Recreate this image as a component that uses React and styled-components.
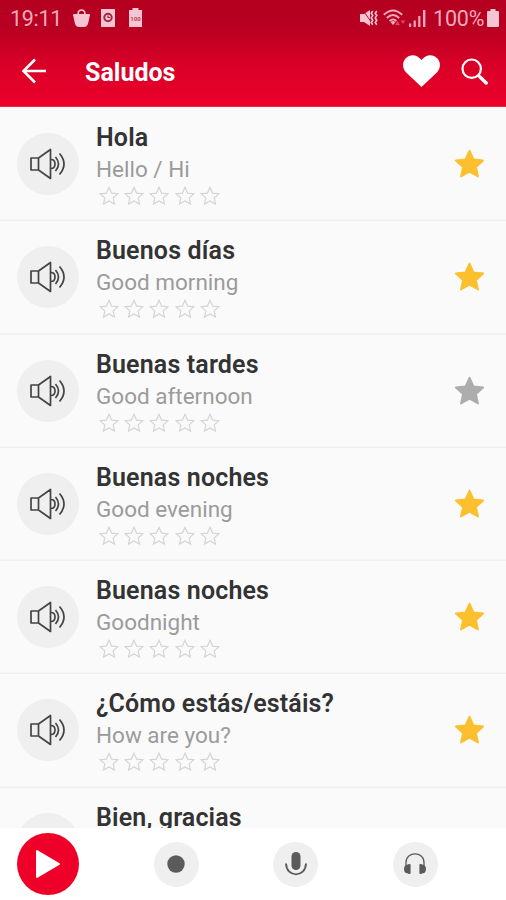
import React from "react";
import styled, { createGlobalStyle } from "styled-components";

const phrases = [
  { es: "Hola", en: "Hello / Hi", saved: true },
  { es: "Buenos días", en: "Good morning", saved: true },
  { es: "Buenas tardes", en: "Good afternoon", saved: false },
  { es: "Buenas noches", en: "Good evening", saved: true },
  { es: "Buenas noches", en: "Goodnight", saved: true },
  { es: "¿Cómo estás/estáis?", en: "How are you?", saved: true },
  { es: "Bien, gracias" },
];

const STAR =
  "M12 1.6l3.1 6.9 7.5.8-5.6 5 1.6 7.4L12 17.9l-6.6 3.8L7 14.3l-5.6-5 7.5-.8z";

const StatusBar = () => (
  <StatusStyled>
    <span className="clock">19:11</span>
    <svg className="bag" width="17" height="18" viewBox="0 0 17 18">
      <path d="M1 5h15q1 0 .9 1.200L15.200 14q-1 4-4 4H5.800q-3 0-4-4L.1 6.200Q0 5 1 5z" fill="#f7c5d1" />
      <path d="M5.200 6V4Q5.500 1 8.500 1t3.300 3v2" fill="none" stroke="#f7c5d1" strokeWidth="1.600" />
    </svg>
    <svg className="card" width="14" height="18" viewBox="0 0 14 18">
      <path fill="#f7c5d1" d="M0 0h14v18H0z" />
      <circle cx="7" cy="8.500" r="3.700" fill="#f7c5d1" stroke="#a3243f" strokeWidth="2" />
      <path d="M7 6.500v2h2" fill="none" stroke="#a3243f" strokeWidth="1.200" />
    </svg>
    <svg className="full" width="13" height="19" viewBox="0 0 13 19">
      <path fill="#f7c5d1" d="M3.500 0h6v2H13v17H0V2h3.500z" />
      <text x="6.500" y="12.500" textAnchor="middle" fontSize="6" fontWeight="700" fill="#b5445c">100</text>
    </svg>
    <div className="right">
      <svg width="18" height="18" viewBox="0 0 18 18">
        <path fill="#f7c5d1" d="M0 5h4l6-4v16l-6-4H0z" />
        <path d="M2 0l10 14" stroke="#b80523" strokeWidth="1" />
        <path d="M12.800 2l-1.600 2.300 1.600 2.300-1.600 2.300 1.600 2.300-1.600 2.300 1.600 2.300M16.800 2l-1.600 2.300 1.600 2.300-1.600 2.300 1.600 2.300-1.600 2.300 1.600 2.300" fill="none" stroke="#f7c5d1" strokeWidth="1.600" />
      </svg>
      <svg className="wifi" width="23" height="18" viewBox="0 0 23 18">
        <g fill="none" stroke="#f0aabb" strokeWidth="1.900">
          <path d="M.8 5.800Q10 -3 19.200 5.800M3.800 9Q10 3 16.200 9M6.600 12.200Q10 8.500 13.400 12.200" />
        </g>
        <path d="M7.500 13.200Q10 11 12.500 13.200L10 16z" fill="#f0aabb" />
        <path d="M12 16l2.500-4 2.500 4zM17.500 11.500h5L20 15z" fill="#d94763" />
      </svg>
      <svg className="signal" width="17" height="17" viewBox="0 0 17 17">
        <path fill="#efa6b8" d="M0 13.500h2.200V17H0zM4.600 10.500h2.200V17H4.600zM9.200 6h2.200v11H9.200zM14 0h2.400v17H14z" />
      </svg>
      <span className="percent">100%</span>
      <svg width="12" height="18" viewBox="0 0 12 18">
        <path fill="#f7c5d1" d="M3.500 0h5v2H11q1 0 1 1v14q0 1-1 1H1q-1 0-1-1V3q0-1 1-1h2.500z" />
      </svg>
    </div>
  </StatusStyled>
);

const Toolbar = () => (
  <ToolbarStyled>
    <svg width="26" height="26" viewBox="0 0 26 26" fill="none" stroke="#fff" strokeWidth="2.600">
      <path d="M25 13H2.500M14 1.500L2.500 13 14 24.500" />
    </svg>
    <h1>Saludos</h1>
    <svg className="heart" width="37" height="32" viewBox="0 0 37 32">
      <path fill="#fff" d="M18.500 32L3.400 17.700C-1 13.400-1 7 2.800 3.200 7-1 14-1 18.500 5 23-1 30-1 34.200 3.200 38 7 38 13.400 33.600 17.700z" />
    </svg>
    <svg width="27" height="27" viewBox="0 0 27 27" fill="none" stroke="#fff">
      <circle cx="10.700" cy="10.700" r="9.200" strokeWidth="2.200" />
      <path d="M17.200 17.200l2 2" strokeWidth="2.400" />
      <path d="M19 19l6.200 6" strokeWidth="3.400" strokeLinecap="round" />
    </svg>
  </ToolbarStyled>
);

const Phrase = ({ es, en, saved }) => (
  <PhraseStyled>
    <Speaker>
      <svg width="36" height="32" viewBox="0 0 36 32" fill="none" stroke="#444" strokeWidth="1.700">
        <path d="M1 10h7.500v12H1zM8.500 10L20.500 1.500v29L8.500 22" strokeLinejoin="round" />
        <path d="M21 11.500q4 0 4 4.500t-4 4.500M25.500 9q6 7 0 14M29.500 5.500q9 10.500 0 21" />
      </svg>
    </Speaker>
    <div className="text">
      <h2>{es}</h2>
      {en && <p>{en}</p>}
      {en && (
        <Rating>
          {[1, 2, 3, 4, 5].map((n) => (
            <svg key={n} width="20" height="20" viewBox="0 0 24 24">
              <path d={STAR} fill="none" stroke="#d4d4d4" strokeWidth="1.400" />
            </svg>
          ))}
        </Rating>
      )}
    </div>
    {en && (
      <Favorite $saved={saved} width="31" height="32" viewBox="0 0 24 24">
        <path d={STAR} strokeWidth="1.400" strokeLinejoin="round" />
      </Favorite>
    )}
  </PhraseStyled>
);

const Player = () => (
  <PlayerStyled>
    <RoundButton $size={62} $color="#ee0029">
      <svg width="26" height="30" viewBox="0 0 26 30">
        <path d="M2 2v26L24 15z" fill="#fff" stroke="#fff" strokeWidth="2" strokeLinejoin="round" />
      </svg>
    </RoundButton>
    <RoundButton $size={45}>
      <svg width="18" height="18" viewBox="0 0 18 18">
        <circle cx="9" cy="9" r="8.700" fill="#5b5b5b" />
      </svg>
    </RoundButton>
    <RoundButton $size={45}>
      <svg width="22" height="24" viewBox="0 0 22 24">
        <rect x="6.500" y="0" width="9" height="18" rx="4.500" fill="#5b5b5b" />
        <path d="M1 11.500C1.500 26 20.500 26 21 11.500" fill="none" stroke="#5b5b5b" strokeWidth="1.900" />
      </svg>
    </RoundButton>
    <RoundButton $size={45}>
      <svg width="22" height="22" viewBox="0 0 22 22">
        <path d="M2 13v-3.500C2 -2 20 -2 20 9.500V13" fill="none" stroke="#5b5b5b" strokeWidth="1.300" />
        <rect x="4" y="11" width="2.600" height="10" rx="1" fill="#5b5b5b" />
        <rect x="15.400" y="11" width="2.600" height="10" rx="1" fill="#5b5b5b" />
        <path d="M4.500 11.500Q0 11.500 0 16t4.500 4.500zM17.500 11.500q4.500 0 4.500 4.500t-4.500 4.500z" fill="#5b5b5b" />
      </svg>
    </RoundButton>
  </PlayerStyled>
);

const App = () => (
  <Screen>
    <GlobalStyle />
    <Header>
      <StatusBar />
      <Toolbar />
    </Header>
    <List>
      {phrases.map((phrase, i) => (
        <Phrase key={i} {...phrase} />
      ))}
    </List>
    <Player />
  </Screen>
);

const GlobalStyle = createGlobalStyle`
  * {
    box-sizing: border-box;
    margin: 0;
    padding: 0;
  }
  body {
    font-family: Roboto, sans-serif;
    overflow: hidden;
  }
  svg {
    display: block;
    flex-shrink: 0;
  }
`;

const Screen = styled.div`
  width: 506px;
  height: 900px;
  display: flex;
  flex-direction: column;
  background: #fafafa;
`;

const Header = styled.header`
  flex: 0 0 107px;
  background: linear-gradient(#b50020 0%, #b80022 25%, #d80027 60%, #ec002a 100%);
  border-bottom: 1px solid #e5284a;
`;

const StatusStyled = styled.div`
  height: 36px;
  display: flex;
  align-items: center;
  padding: 0 7px 0 10px;
  color: #f0a9b9;
  font-size: 21.5px;
  .clock {
    width: 63px;
    letter-spacing: -0.3px;
  }
  .card {
    margin-left: 11px;
  }
  .full {
    margin-left: 14px;
    margin-top: -2px;
  }
  .right {
    margin-left: auto;
    display: flex;
    align-items: center;
  }
  .wifi {
    margin-left: 5px;
  }
  .signal {
    margin-left: 3px;
  }
  .percent {
    width: 53px;
    margin: 0 1px 0 7px;
    letter-spacing: -0.2px;
  }
`;

const ToolbarStyled = styled.div`
  height: 70px;
  display: flex;
  align-items: center;
  padding: 0 18px 0 21px;
  h1 {
    margin-left: 38px;
    flex: 1;
    color: #fff;
    font-size: 25px;
    font-weight: 700;
    line-height: 30px;
    padding-top: 3px;
  }
  .heart {
    margin-right: 21px;
  }
`;

const List = styled.main`
  flex: 1;
  min-height: 0;
  overflow: hidden;
`;

const PhraseStyled = styled.section`
  height: 113.3px;
  display: flex;
  align-items: flex-start;
  padding: 26px 21px 0 17px;
  box-shadow: 0 1px 0 #f0f0f0, inset 0 -1px 0 #f5f5f5;
  .text {
    flex: 1;
    margin: -11px 0 0 17px;
    white-space: nowrap;
  }
  h2 {
    color: #333;
    font-size: 25px;
    font-weight: 600;
    line-height: 32px;
    letter-spacing: 0.15px;
  }
  p {
    color: #9b9b9b;
    font-size: 22.5px;
    line-height: 31px;
  }
`;

const Speaker = styled.div`
  width: 62px;
  height: 62px;
  border-radius: 50%;
  background: #efefef;
  display: flex;
  align-items: center;
  justify-content: center;
`;

const Rating = styled.div`
  display: flex;
  gap: 5.4px;
  padding: 1px 0 0 2.5px;
`;

const Favorite = styled.svg`
  margin: 15px 0 0 10px;
  fill: ${(props) => (props.$saved ? "#fcc02e" : "#adadad")};
  stroke: ${(props) => (props.$saved ? "#fcc02e" : "#adadad")};
`;

const PlayerStyled = styled.footer`
  flex: 0 0 72px;
  display: grid;
  grid-template-columns: 96px 160px 79px 160px;
  align-items: center;
  justify-items: center;
  background: #fff;
`;

const RoundButton = styled.button`
  width: ${(props) => props.$size}px;
  height: ${(props) => props.$size}px;
  border: 0;
  border-radius: 50%;
  background: ${(props) => props.$color || "#efefef"};
  display: flex;
  align-items: center;
  justify-content: center;
`;

export default App;
